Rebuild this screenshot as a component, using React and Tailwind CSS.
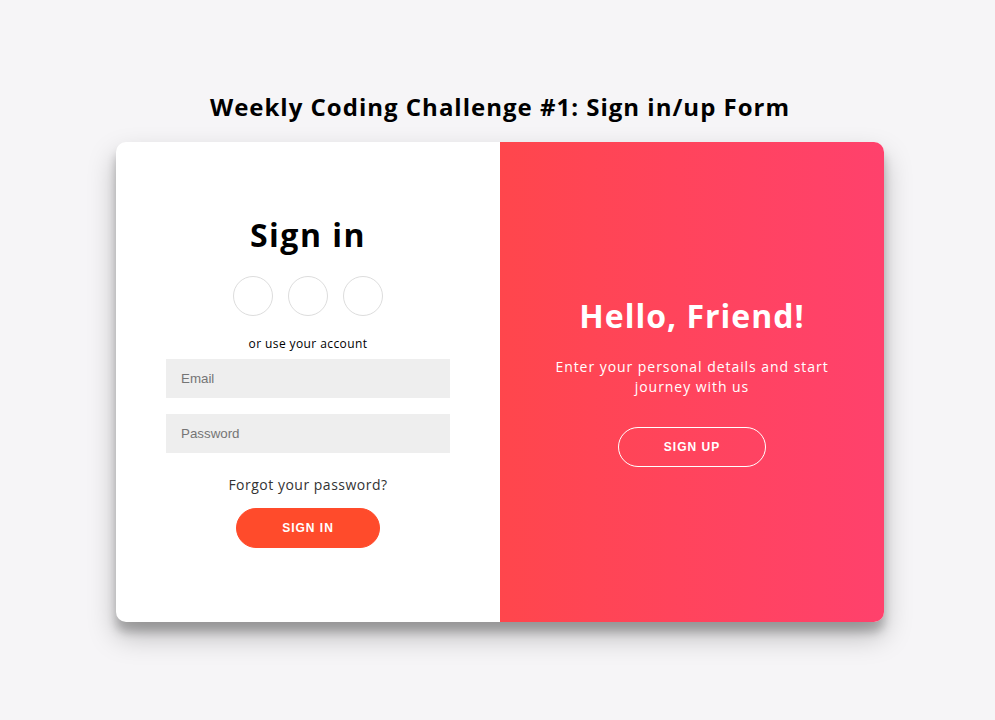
import React from 'react';

const App = () => {
    return (
        <div className="min-h-screen bg-[#f6f5f7] flex flex-col items-center pt-[92px] pl-[5px] font-['Open_Sans',sans-serif] text-black">
            {/* Page title */}
            <h2 className="text-[24px] font-bold leading-[30px] h-[30px] tracking-[1px]">
                Weekly Coding Challenge #1: Sign in/up Form
            </h2>

            {/* Card */}
            <div className="mt-[20px] w-[768px] h-[480px] bg-white rounded-[10px] overflow-hidden flex shadow-[0_14px_28px_rgba(0,0,0,0.25),0_10px_10px_rgba(0,0,0,0.22)]">
                {/* Sign in form */}
                <form className="w-[384px] h-full flex flex-col items-center justify-center px-[50px] text-center">
                    <h1 className="text-[32px] font-bold leading-[36px] h-[36px] mb-[3px] tracking-[1.5px]">Sign in</h1>
                    <div className="flex gap-[15px] my-[20px]">
                        <a href="#" className="w-[40px] h-[40px] rounded-full border border-[#dddddd]" />
                        <a href="#" className="w-[40px] h-[40px] rounded-full border border-[#dddddd]" />
                        <a href="#" className="w-[40px] h-[40px] rounded-full border border-[#dddddd]" />
                    </div>
                    <span className="text-[12px] leading-[15px] h-[15px] tracking-[0.4px]">or use your account</span>
                    <input
                        type="email"
                        placeholder="Email"
                        className="w-full h-[39px] my-[8px] px-[15px] bg-[#eeeeee] text-[13.333px] font-['Liberation_Sans',sans-serif] placeholder:text-[#757575] outline-none"
                    />
                    <input
                        type="password"
                        placeholder="Password"
                        className="w-full h-[39px] my-[8px] px-[15px] bg-[#eeeeee] text-[13.333px] font-['Liberation_Sans',sans-serif] placeholder:text-[#757575] outline-none"
                    />
                    <a href="#" className="text-[14px] leading-[17px] h-[17px] my-[15px] text-[#333333] tracking-[0.5px]">
                        Forgot your password?
                    </a>
                    <button
                        type="button"
                        className="h-[40px] px-[45px] rounded-[20px] border border-[#ff4b2b] bg-[#ff4b2b] text-white text-[12px] font-bold tracking-[1px] uppercase font-['Liberation_Sans',sans-serif]"
                    >
                        Sign In
                    </button>
                </form>

                {/* Overlay panel */}
                <div className="w-[384px] h-full flex flex-col items-center justify-center px-[40px] text-center text-white bg-gradient-to-r from-[#ff464c] to-[#ff416c]">
                    <h1 className="text-[32px] font-bold leading-[36px] h-[36px] mb-[3px] tracking-[1px]">Hello, Friend!</h1>
                    <p className="text-[14px] font-normal leading-[20px] tracking-[0.95px] mt-[20px] mb-[30px]">
                        Enter your personal details and start<br />journey with us
                    </p>
                    <button
                        type="button"
                        className="h-[40px] px-[45px] rounded-[20px] border border-white bg-transparent text-white text-[12px] font-bold tracking-[1px] uppercase font-['Liberation_Sans',sans-serif]"
                    >
                        Sign Up
                    </button>
                </div>
            </div>
        </div>
    );
};

export default App;
